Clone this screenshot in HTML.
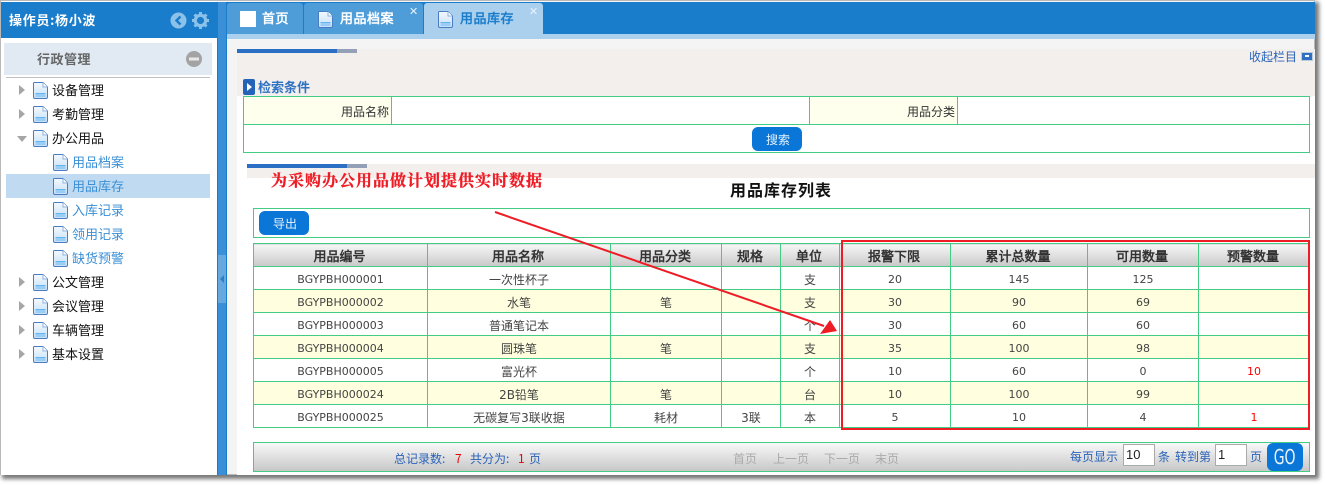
<!DOCTYPE html>
<html lang="zh-CN">
<head>
<meta charset="utf-8">
<title>用品库存</title>
<style>
html,body{margin:0;padding:0;background:#fff;width:1325px;height:485px;overflow:hidden}
body{position:relative;font-family:"Liberation Sans","WenQuanYi Zen Hei","Noto Sans CJK SC",sans-serif;font-size:13px;color:#333}
.a{position:absolute;box-sizing:border-box}
.t{position:absolute;white-space:nowrap;line-height:16px}
.cjk{font-family:"WenQuanYi Zen Hei","Noto Sans CJK SC",sans-serif}
.ic{position:absolute;width:15px;height:17px}
.nav{font-size:13px;color:#111;font-family:"WenQuanYi Zen Hei",sans-serif;margin-top:1px}
.sub{font-size:13px;color:#3a8fd6;font-family:"WenQuanYi Zen Hei",sans-serif;margin-top:1px}
.tri{position:absolute;width:0;height:0;border-left:6px solid #a6a6a6;border-top:5px solid transparent;border-bottom:5px solid transparent}
.tab{position:absolute;top:3px;height:31px;background:#4e9dd9;border-radius:3px 3px 0 0}
.tabt{position:absolute;top:11px;font-weight:bold;font-size:13px;color:#fff;line-height:16px;white-space:nowrap;font-family:"WenQuanYi Zen Hei",sans-serif}
.x{position:absolute;top:6px;color:#e8f2fb;font-size:11px;line-height:12px;font-family:"DejaVu Sans",sans-serif}
table{border-collapse:collapse;table-layout:fixed;position:absolute}
td,th{border:1px solid #43cc83;padding:0;text-align:center;font-size:12px;font-weight:normal;color:#444;overflow:hidden;white-space:nowrap;font-family:"WenQuanYi Zen Hei","DejaVu Sans",sans-serif}
#g th{height:23px;background:linear-gradient(#f6f6f6,#c9c9c9);font-weight:bold;color:#333;font-size:13px;padding-right:2px;box-sizing:border-box}
#g td{height:20px;padding-top:2px}
#g tr.y td{background:#ffffdf}
#g td.num{font-family:"DejaVu Sans",sans-serif;font-size:11px;letter-spacing:0}
#g td.r{color:#f00}
</style>
</head>
<body>
<svg width="0" height="0" style="position:absolute">
<defs>
<linearGradient id="dg" x1="0" y1="0" x2="0" y2="1"><stop offset="0" stop-color="#f4f9fe"/><stop offset="1" stop-color="#c6e0f8"/></linearGradient>
<symbol id="doc" viewBox="0 0 15 17">
<path d="M1.500 .5H10L14.500 5V15Q14.500 16.500 13 16.500H2Q.5 16.500 .5 15V1.500Q.5 .5 1.500 .5Z" fill="url(#dg)" stroke="#4b7cc2"/>
<path d="M10 .5V5H14.500" fill="#fff" stroke="#8fb2de"/>
<rect x="2.500" y="11" width="10" height="1.500" fill="#63b6f2"/>
<rect x="2.500" y="13.500" width="10" height="1" fill="#63b6f2"/>
</symbol>
</defs>
</svg>

<!-- window frame -->
<div class="a" style="left:0;top:0;width:1315px;height:475px;background:#f4f4f4;border:1px solid #b9b9b9;box-shadow:3px 3px 4px 1px #777"></div>

<!-- sidebar -->
<div class="a" style="left:1px;top:1px;width:216px;height:474px;background:#fff"></div>
<div class="a" style="left:1px;top:2px;width:216px;height:36px;background:#1a7dcb"></div>
<div class="t cjk" style="left:9px;top:12px;color:#fff;font-weight:bold;font-size:13px;letter-spacing:.7px">操作员:杨小波</div>
<svg class="a" style="left:170px;top:12px" width="17" height="17" viewBox="0 0 17 17"><circle cx="8.500" cy="8.500" r="8" fill="#8cc1ea"/><path d="M10.500 4.500 6.500 8.500 10.500 12.500" fill="none" stroke="#1a7dcb" stroke-width="2.400"/></svg>
<svg class="a" style="left:192px;top:12px" width="17" height="17" viewBox="0 0 17 17"><circle cx="8.500" cy="8.500" r="5.200" fill="none" stroke="#8cc1ea" stroke-width="3.200"/><path d="M8.500 0V3M8.500 14V17M0 8.500H3M14 8.500H17M2.500 2.500 4.500 4.500M12.500 12.500 14.500 14.500M14.500 2.500 12.500 4.500M4.500 12.500 2.500 14.500" stroke="#8cc1ea" stroke-width="3"/></svg>

<div class="a" style="left:4px;top:43px;width:208px;height:32px;background:#e1eaf3"></div>
<div class="t cjk" style="left:37px;top:51px;font-weight:bold;color:#666;font-size:13px;letter-spacing:.5px">行政管理</div>
<svg class="a" style="left:186px;top:51px" width="16" height="16" viewBox="0 0 16 16"><circle cx="8" cy="8" r="8" fill="#a3a3a3"/><rect x="3" y="6.500" width="10" height="3" fill="#e8e8e8"/></svg>
<div class="a" style="left:6px;top:77px;width:204px;height:1px;background:#c0c0c0"></div>

<div class="tri" style="left:19px;top:85px"></div>
<svg class="ic" style="left:33px;top:82px"><use href="#doc"/></svg><div class="t nav" style="left:52px;top:82px">设备管理</div>
<div class="tri" style="left:19px;top:109px"></div>
<svg class="ic" style="left:33px;top:106px"><use href="#doc"/></svg><div class="t nav" style="left:52px;top:106px">考勤管理</div>
<div class="a" style="left:17px;top:136px;width:0;height:0;border-top:6px solid #a6a6a6;border-left:5px solid transparent;border-right:5px solid transparent"></div>
<svg class="ic" style="left:33px;top:130px"><use href="#doc"/></svg><div class="t nav" style="left:52px;top:130px">办公用品</div>

<svg class="ic" style="left:53px;top:154px"><use href="#doc"/></svg><div class="t sub" style="left:72px;top:154px">用品档案</div>
<div class="a" style="left:6px;top:174px;width:204px;height:24px;background:#c0dbf1"></div>
<svg class="ic" style="left:53px;top:178px"><use href="#doc"/></svg><div class="t sub" style="left:72px;top:178px">用品库存</div>
<svg class="ic" style="left:53px;top:202px"><use href="#doc"/></svg><div class="t sub" style="left:72px;top:202px">入库记录</div>
<svg class="ic" style="left:53px;top:226px"><use href="#doc"/></svg><div class="t sub" style="left:72px;top:226px">领用记录</div>
<svg class="ic" style="left:53px;top:250px"><use href="#doc"/></svg><div class="t sub" style="left:72px;top:250px">缺货预警</div>

<div class="tri" style="left:19px;top:277px"></div>
<svg class="ic" style="left:33px;top:274px"><use href="#doc"/></svg><div class="t nav" style="left:52px;top:274px">公文管理</div>
<div class="tri" style="left:19px;top:301px"></div>
<svg class="ic" style="left:33px;top:298px"><use href="#doc"/></svg><div class="t nav" style="left:52px;top:298px">会议管理</div>
<div class="tri" style="left:19px;top:325px"></div>
<svg class="ic" style="left:33px;top:322px"><use href="#doc"/></svg><div class="t nav" style="left:52px;top:322px">车辆管理</div>
<div class="tri" style="left:19px;top:349px"></div>
<svg class="ic" style="left:33px;top:346px"><use href="#doc"/></svg><div class="t nav" style="left:52px;top:346px">基本设置</div>

<!-- splitter -->
<div class="a" style="left:217px;top:2px;width:10px;height:473px;background:#3a8fd6;border-left:1px solid #1a7dcb;border-right:1px solid #1a7dcb"></div>
<div class="a" style="left:218px;top:255px;width:8px;height:48px;background:#66a8e0"></div>
<div class="a" style="left:220px;top:275px;width:0;height:0;border-right:4px solid #2f7fc4;border-top:4px solid transparent;border-bottom:4px solid transparent"></div>

<!-- tabs -->
<div class="a" style="left:227px;top:2px;width:1088px;height:32px;background:#1a7dcb"></div>
<div class="a" style="left:227px;top:34px;width:1088px;height:5px;background:#abd0ee"></div>
<div class="tab" style="left:227px;width:76px"></div>
<div class="a" style="left:240px;top:11px;width:16px;height:16px;background:#fff"></div>
<div class="tabt" style="left:262px;letter-spacing:.5px">首页</div>
<div class="tab" style="left:304px;width:119px"></div>
<svg class="ic" style="left:318px;top:11px"><use href="#doc"/></svg>
<div class="tabt" style="left:340px;letter-spacing:.5px">用品档案</div>
<div class="x" style="left:409px">✕</div>
<div class="tab" style="left:424px;width:119px;background:#abd0ee"></div>
<svg class="ic" style="left:438px;top:11px"><use href="#doc"/></svg>
<div class="tabt" style="left:460px;color:#1a7dcb;letter-spacing:.5px">用品库存</div>
<div class="x" style="left:529px">✕</div>

<!-- content bg -->
<div class="a" style="left:237px;top:49px;width:1078px;height:426px;background:#fff"></div>
<div class="a" style="left:237px;top:49px;width:1078px;height:47px;background:#f2efec"></div>
<div class="a" style="left:237px;top:49px;width:100px;height:4px;background:#2b6fc4"></div>
<div class="a" style="left:337px;top:49px;width:20px;height:4px;background:#93a0b8"></div>
<div class="t cjk" style="left:1249px;top:49px;color:#2b63b8;font-size:12px">收起栏目</div>
<div class="a" style="left:1301px;top:52px;width:12px;height:9px;background:#2f6fc4;border:1px solid #bcd"></div>
<div class="a" style="left:1305px;top:55px;width:4px;height:2px;background:#fff"></div>

<svg class="a" style="left:243px;top:79px" width="13" height="16" viewBox="0 0 13 16"><rect width="12" height="16" rx="2" fill="#2364b8"/><path d="M4 4 9 8 4 12Z" fill="#fff"/></svg>
<div class="t cjk" style="left:258px;top:79px;color:#2f72c4;font-weight:bold;font-size:13px">检索条件</div>

<!-- search table -->
<div class="a" style="left:243px;top:96px;width:1067px;height:57px;border:1px solid #43cc83;background:#fff"></div>
<div class="a" style="left:244px;top:97px;width:147px;height:27px;background:#ffffee"></div>
<div class="a" style="left:810px;top:97px;width:147px;height:27px;background:#ffffee"></div>
<div class="a" style="left:243px;top:124px;width:1067px;height:1px;background:#43cc83"></div>
<div class="a" style="left:391px;top:96px;width:1px;height:28px;background:#43cc83"></div>
<div class="a" style="left:809px;top:96px;width:1px;height:28px;background:#43cc83"></div>
<div class="a" style="left:957px;top:96px;width:1px;height:28px;background:#43cc83"></div>
<div class="t cjk" style="left:341px;top:104px;font-size:12px;color:#333">用品名称</div>
<div class="t cjk" style="left:907px;top:104px;font-size:12px;color:#333">用品分类</div>
<div class="a" style="left:752px;top:127px;width:50px;height:24px;background:#0a76d8;border-radius:6px"></div>
<div class="t cjk" style="left:766px;top:132px;font-size:12px;color:#e6f2fc">搜索</div>

<!-- list title -->
<div class="a" style="left:247px;top:164px;width:1068px;height:14px;background:#f2efec"></div>
<div class="a" style="left:247px;top:164px;width:100px;height:4px;background:#2b6fc4"></div>
<div class="a" style="left:347px;top:164px;width:20px;height:4px;background:#93a0b8"></div>
<div class="t" style="left:271px;top:170px;font-family:'Noto Serif CJK SC','WenQuanYi Zen Hei',serif;font-size:16px;line-height:20px;font-weight:bold;color:#ee1c25;letter-spacing:1px;-webkit-text-stroke:.3px #ee1c25">为采购办公用品做计划提供实时数据</div>
<div class="t cjk" style="left:730px;top:180px;font-size:16px;line-height:18px;font-weight:bold;color:#111;letter-spacing:1px">用品库存列表</div>

<!-- toolbar -->
<div class="a" style="left:253px;top:208px;width:1057px;height:30px;border:1px solid #43cc83;background:#fff"></div>
<div class="a" style="left:259px;top:211px;width:50px;height:24px;background:#0a76d8;border-radius:6px"></div>
<div class="t cjk" style="left:273px;top:216px;font-size:12px;color:#e6f2fc">导出</div>

<!-- grid -->
<table id="g" style="left:253px;top:243px;width:1056px">
<colgroup><col style="width:174px"><col style="width:183px"><col style="width:111px"><col style="width:59px"><col style="width:59px"><col style="width:111px"><col style="width:137px"><col style="width:111px"><col style="width:111px"></colgroup>
<tr><th>用品编号</th><th>用品名称</th><th>用品分类</th><th>规格</th><th>单位</th><th>报警下限</th><th>累计总数量</th><th>可用数量</th><th>预警数量</th></tr>
<tr><td class="num">BGYPBH000001</td><td>一次性杯子</td><td></td><td></td><td>支</td><td class="num">20</td><td class="num">145</td><td class="num">125</td><td></td></tr>
<tr class="y"><td class="num">BGYPBH000002</td><td>水笔</td><td>笔</td><td></td><td>支</td><td class="num">30</td><td class="num">90</td><td class="num">69</td><td></td></tr>
<tr><td class="num">BGYPBH000003</td><td>普通笔记本</td><td></td><td></td><td>个</td><td class="num">30</td><td class="num">60</td><td class="num">60</td><td></td></tr>
<tr class="y"><td class="num">BGYPBH000004</td><td>圆珠笔</td><td>笔</td><td></td><td>支</td><td class="num">35</td><td class="num">100</td><td class="num">98</td><td></td></tr>
<tr><td class="num">BGYPBH000005</td><td>富光杯</td><td></td><td></td><td>个</td><td class="num">10</td><td class="num">60</td><td class="num">0</td><td class="num r">10</td></tr>
<tr class="y"><td class="num">BGYPBH000024</td><td>2B铅笔</td><td>笔</td><td></td><td>台</td><td class="num">10</td><td class="num">100</td><td class="num">99</td><td></td></tr>
<tr><td class="num">BGYPBH000025</td><td>无碳复写3联收据</td><td>耗材</td><td>3联</td><td>本</td><td class="num">5</td><td class="num">10</td><td class="num">4</td><td class="num r">1</td></tr>
</table>

<!-- red box and arrow -->
<div class="a" style="left:841px;top:240px;width:469px;height:190px;border:2px solid #ee1c25"></div>
<svg class="a" style="left:0;top:0" width="1325" height="485" viewBox="0 0 1325 485">
<path d="M495 212 824 326" stroke="#ee1c25" stroke-width="2" fill="none"/>
<path d="M837 331 820 334 830 320Z" fill="#ee1c25"/>
</svg>

<!-- pagination -->
<div class="a" style="left:253px;top:442px;width:1057px;height:30px;border:1px solid #43cc83;background:linear-gradient(#f8f8f8,#c8c8c8)"></div>
<div class="t cjk" style="left:394px;top:451px;font-size:12px;color:#2b63b8">总记录数:</div>
<div class="t cjk" style="left:455px;top:451px;font-size:12px;color:#e00">7</div>
<div class="t cjk" style="left:470px;top:451px;font-size:12px;color:#2b63b8">共分为:</div>
<div class="t cjk" style="left:518px;top:451px;font-size:12px;color:#e00">1</div>
<div class="t cjk" style="left:529px;top:451px;font-size:12px;color:#2b63b8">页</div>
<div class="t cjk" style="left:733px;top:451px;font-size:12px;color:#aaa">首页</div>
<div class="t cjk" style="left:773px;top:451px;font-size:12px;color:#aaa">上一页</div>
<div class="t cjk" style="left:824px;top:451px;font-size:12px;color:#aaa">下一页</div>
<div class="t cjk" style="left:875px;top:451px;font-size:12px;color:#aaa">末页</div>
<div class="t cjk" style="left:1070px;top:449px;font-size:12px;color:#2b63b8">每页显示</div>
<div class="a" style="left:1123px;top:444px;width:32px;height:22px;background:#fff;border:1px solid #aaa;font-size:13px;line-height:19px;padding-left:2px;color:#222">10</div>
<div class="t cjk" style="left:1158px;top:449px;font-size:12px;color:#2b63b8">条</div>
<div class="t cjk" style="left:1175px;top:449px;font-size:12px;color:#2b63b8">转到第</div>
<div class="a" style="left:1215px;top:444px;width:32px;height:22px;background:#fff;border:1px solid #aaa;font-size:13px;line-height:19px;padding-left:2px;color:#222">1</div>
<div class="t cjk" style="left:1250px;top:449px;font-size:12px;color:#2b63b8">页</div>
<div class="a" style="left:1267px;top:443px;width:36px;height:28px;background:#0a76d8;border-radius:6px;color:#e6f2fc;text-align:center;font-size:20px;line-height:29px;font-family:'DejaVu Sans',sans-serif"><span style="display:inline-block;transform:scaleX(.7)">GO</span></div>
</body>
</html>
